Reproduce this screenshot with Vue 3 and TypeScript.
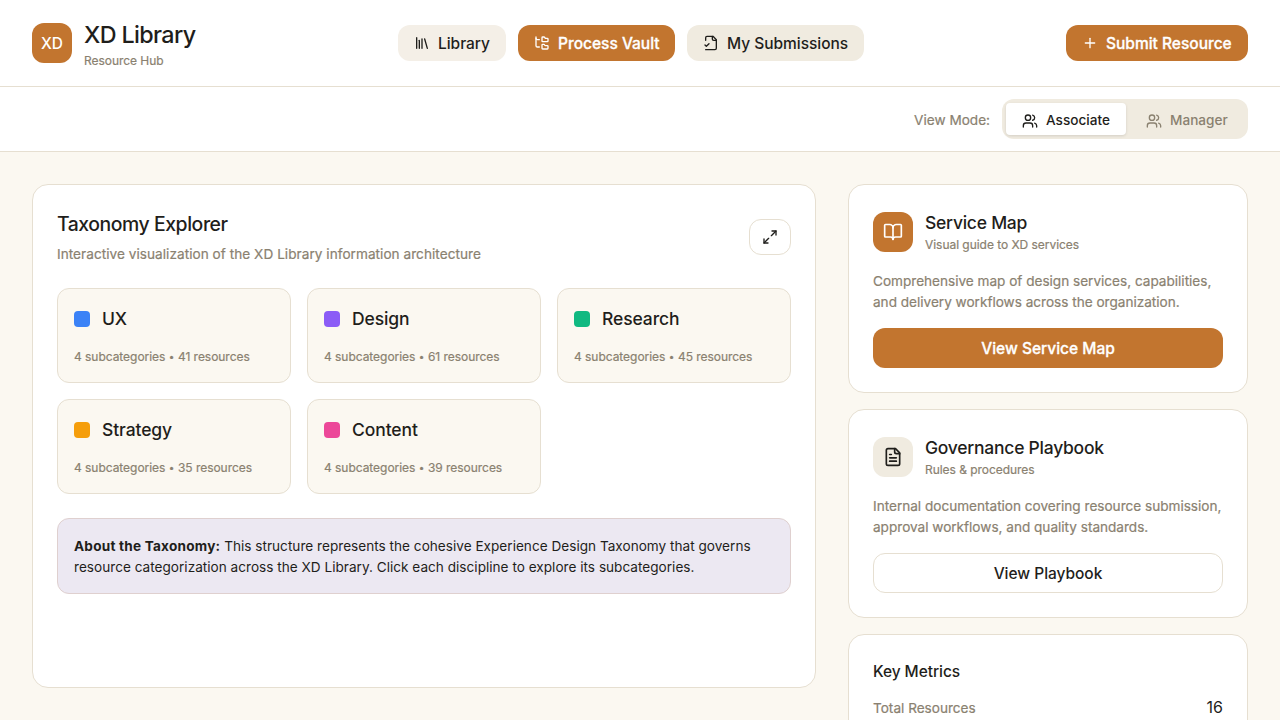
<script setup lang="ts">
import { ref } from 'vue'

interface Discipline {
  name: string
  swatch: string
  subcategories: number
  resources: number
}

const disciplines: Discipline[] = [
  { name: 'UX', swatch: 'blue', subcategories: 4, resources: 41 },
  { name: 'Design', swatch: 'violet', subcategories: 4, resources: 61 },
  { name: 'Research', swatch: 'green', subcategories: 4, resources: 45 },
  { name: 'Strategy', swatch: 'amber', subcategories: 4, resources: 35 },
  { name: 'Content', swatch: 'pink', subcategories: 4, resources: 39 },
]

const modes = ['Associate', 'Manager'] as const
const mode = ref<(typeof modes)[number]>('Associate')
</script>

<template>
  <div class="page">
    <header class="topbar">
      <div class="brand">
        <div class="logo">XD</div>
        <div>
          <h1 class="brand-name">XD Library</h1>
          <p class="brand-sub">Resource Hub</p>
        </div>
      </div>
      <nav class="nav">
        <button class="btn nav-library">
          <svg class="icon" viewBox="0 0 24 24"><path d="m16 6 4 14" /><path d="M12 6v14" /><path d="M8 8v12" /><path d="M4 4v16" /></svg>
          <span>Library</span>
        </button>
        <button class="btn nav-vault primary">
          <svg class="icon" viewBox="0 0 24 24"><path d="M20 10a1 1 0 0 0 1-1V6a1 1 0 0 0-1-1h-2.500a1 1 0 0 1-.8-.4l-.9-1.200A1 1 0 0 0 15 3h-2a1 1 0 0 0-1 1v5a1 1 0 0 0 1 1Z" /><path d="M20 21a1 1 0 0 0 1-1v-3a1 1 0 0 0-1-1h-2.900a1 1 0 0 1-.88-.55l-.42-.85a1 1 0 0 0-.92-.6H13a1 1 0 0 0-1 1v5a1 1 0 0 0 1 1Z" /><path d="M3 5a2 2 0 0 0 2 2h3" /><path d="M3 3v13a2 2 0 0 0 2 2h3" /></svg>
          <span>Process Vault</span>
        </button>
        <button class="btn nav-submissions">
          <svg class="icon" viewBox="0 0 24 24"><path d="M4 22h14a2 2 0 0 0 2-2V7l-5-5H6a2 2 0 0 0-2 2v4" /><path d="M14 2v4a2 2 0 0 0 2 2h4" /><path d="m3 15 2 2 4-4" /></svg>
          <span>My Submissions</span>
        </button>
      </nav>
      <button class="btn submit primary">
        <svg class="icon" viewBox="0 0 24 24"><path d="M5 12h14" /><path d="M12 5v14" /></svg>
        <span>Submit Resource</span>
      </button>
    </header>

    <div class="modebar">
      <span class="mode-label">View Mode:</span>
      <div class="toggle">
        <button
          v-for="m in modes"
          :key="m"
          class="toggle-item"
          :class="{ active: mode === m }"
          @click="mode = m"
        >
          <svg class="icon" viewBox="0 0 24 24"><path d="M16 21v-2a4 4 0 0 0-4-4H6a4 4 0 0 0-4 4v2" /><circle cx="9" cy="7" r="4" /><path d="M22 21v-2a4 4 0 0 0-3-3.870" /><path d="M16 3.130a4 4 0 0 1 0 7.750" /></svg>
          <span>{{ m }}</span>
        </button>
      </div>
    </div>

    <main class="content">
      <section class="card explorer">
        <div class="explorer-head">
          <div>
            <h2 class="explorer-title">Taxonomy Explorer</h2>
            <p class="explorer-sub">Interactive visualization of the XD Library information architecture</p>
          </div>
          <button class="expand" aria-label="Expand">
            <svg class="icon" viewBox="0 0 24 24"><path d="M15 3h6v6" /><path d="m21 3-7 7" /><path d="m3 21 7-7" /><path d="M9 21H3v-6" /></svg>
          </button>
        </div>
        <div class="disciplines">
          <article v-for="d in disciplines" :key="d.name" class="discipline">
            <div class="discipline-head">
              <span class="swatch" :class="d.swatch"></span>
              <h3 class="card-title">{{ d.name }}</h3>
            </div>
            <p class="small">{{ d.subcategories }} subcategories <span class="dot">•</span> {{ d.resources }} resources</p>
          </article>
        </div>
        <p class="about">
          <strong>About the Taxonomy:</strong> This structure represents the cohesive Experience Design Taxonomy that governs resource categorization across the XD Library. Click each discipline to explore its subcategories.
        </p>
      </section>

      <aside class="side">
        <section class="card">
          <div class="resource-head">
            <div class="tile primary">
              <svg class="icon large" viewBox="0 0 24 24"><path d="M12 7v14" /><path d="M3 18a1 1 0 0 1-1-1V4a1 1 0 0 1 1-1h5a4 4 0 0 1 4 4 4 4 0 0 1 4-4h5a1 1 0 0 1 1 1v13a1 1 0 0 1-1 1h-6a3 3 0 0 0-3 3 3 3 0 0 0-3-3z" /></svg>
            </div>
            <div>
              <h3 class="card-title">Service Map</h3>
              <p class="small">Visual guide to XD services</p>
            </div>
          </div>
          <p class="blurb">Comprehensive map of design services, capabilities, and delivery workflows across the organization.</p>
          <button class="wide primary">View Service Map</button>
        </section>

        <section class="card">
          <div class="resource-head">
            <div class="tile">
              <svg class="icon large" viewBox="0 0 24 24"><path d="M15 2H6a2 2 0 0 0-2 2v16a2 2 0 0 0 2 2h12a2 2 0 0 0 2-2V7Z" /><path d="M14 2v4a2 2 0 0 0 2 2h4" /><path d="M10 9H8" /><path d="M16 13H8" /><path d="M16 17H8" /></svg>
            </div>
            <div>
              <h3 class="card-title">Governance Playbook</h3>
              <p class="small">Rules &amp; procedures</p>
            </div>
          </div>
          <p class="blurb">Internal documentation covering resource submission, approval workflows, and quality standards.</p>
          <button class="wide outline">View Playbook</button>
        </section>

        <section class="card">
          <h3 class="metrics-title">Key Metrics</h3>
          <div class="metric">
            <span class="metric-label">Total Resources</span>
            <span class="metric-value">16</span>
          </div>
        </section>
      </aside>
    </main>
  </div>
</template>

<style>
html,
body {
  margin: 0;
  overflow: hidden;
  background: #fbf8f1;
}
</style>

<style scoped>
.page {
  height: 720px;
  overflow: hidden;
  background: #fbf8f1;
  color: #1f1e1b;
  font-family: Inter, 'Liberation Sans', sans-serif;
  font-size: 15.5px;
  line-height: 24px;
}
.page * {
  box-sizing: border-box;
}
h1,
h2,
h3,
p {
  margin: 0;
  font-weight: 500;
}
p {
  font-weight: 400;
}
button {
  margin: 0;
  padding: 0;
  border: 0;
  background: none;
  color: inherit;
  font: inherit;
  font-weight: 500;
  letter-spacing: -0.03px;
  white-space: nowrap;
}
.icon {
  display: block;
  flex: none;
  width: 16px;
  height: 16px;
  fill: none;
  stroke: currentColor;
  stroke-width: 2;
  stroke-linecap: round;
  stroke-linejoin: round;
}
.icon.large {
  width: 20px;
  height: 20px;
}
.topbar {
  display: flex;
  align-items: center;
  justify-content: space-between;
  height: 87px;
  padding: 0 32px;
  border-bottom: 1px solid #e6dfd1;
  background: #fff;
}
.brand {
  display: flex;
  align-items: center;
  gap: 12px;
  width: 163px;
  white-space: nowrap;
}
.logo {
  display: flex;
  flex: none;
  align-items: center;
  justify-content: center;
  width: 40px;
  height: 40px;
  padding-top: 2px;
  border-radius: 12px;
  background: #c2752f;
  color: #fff;
  font-weight: 500;
}
.brand-name {
  padding-top: 1px;
  font-size: 23.3px;
  line-height: 35px;
  letter-spacing: -0.63px;
}
.brand-sub,
.small {
  color: #8a8170;
  font-size: 12px;
  line-height: 18px;
  letter-spacing: -0.04px;
}
.brand-sub,
.small,
.explorer-sub,
.blurb,
.mode-label,
.metric-label {
  -webkit-text-stroke: 0.2px currentColor;
}
.dot {
  margin: 0 0.2px;
  font-size: 10px;
  line-height: 0;
  vertical-align: 1px;
}
.nav {
  display: flex;
  gap: 12px;
}
.btn {
  display: flex;
  align-items: center;
  gap: 8.5px;
  height: 36px;
  padding: 0 16px;
  border-radius: 12px;
  background: #f0ebe0;
}
.btn span {
  padding-top: 2px;
}
.nav-library {
  width: 108px;
  background: #f4efe7;
}
.nav-vault {
  width: 157px;
}
.nav-submissions {
  width: 177px;
}
.submit {
  gap: 8px;
  width: 182px;
}
.primary {
  background: #c2752f;
  color: #fff;
}
.btn.primary,
.wide.primary {
  letter-spacing: 0;
  -webkit-text-stroke: 0.3px currentColor;
}
.modebar {
  display: flex;
  align-items: center;
  justify-content: flex-end;
  gap: 12px;
  height: 65px;
  padding: 0 32px;
  border-bottom: 1px solid #e6dfd1;
  background: #fff;
}
.mode-label,
.metric-label {
  color: #8a8170;
  font-size: 13.6px;
  padding-top: 2px;
}
.toggle {
  display: flex;
  gap: 4px;
  width: 246px;
  height: 40px;
  padding: 4px;
  border-radius: 12px;
  background: #f0ebe0;
}
.toggle-item {
  display: flex;
  align-items: center;
  gap: 8px;
  width: 114px;
  height: 32px;
  padding: 3px 16px 0;
  border-radius: 4px;
  color: #8a8170;
  font-size: 13.6px;
  letter-spacing: 0;
}
.toggle-item span {
  padding-bottom: 2px;
}
.toggle-item.active {
  width: 120px;
  background: #fff;
  color: #1f1e1b;
  box-shadow: 0 1px 3px rgba(0, 0, 0, 0.12);
}
.content {
  display: grid;
  grid-template-columns: 784px 400px;
  gap: 32px;
  align-items: start;
  padding: 32px;
}
.card {
  padding: 24px;
  border: 1px solid #e6dfd1;
  border-radius: 16px;
  background: #fff;
}
.explorer {
  height: 504px;
}
.explorer-head {
  display: flex;
  align-items: center;
  justify-content: space-between;
  height: 55px;
}
.explorer-title {
  font-size: 19.4px;
  line-height: 30px;
  letter-spacing: -0.44px;
}
.explorer-sub {
  margin: 5px 0 -1px;
  color: #8a8170;
  font-size: 13.6px;
  line-height: 21px;
  letter-spacing: 0.04px;
}
.expand {
  display: flex;
  align-items: center;
  justify-content: center;
  width: 42px;
  height: 36px;
  border: 1px solid #e6dfd1;
  border-radius: 12px;
}
.disciplines {
  display: grid;
  grid-template-columns: repeat(3, 234px);
  gap: 16px;
  margin-top: 24px;
}
.discipline {
  height: 95px;
  padding: 16px;
  border: 1px solid #e6dfd1;
  border-radius: 12px;
  background: #fbf8f1;
}
.discipline-head {
  display: flex;
  align-items: center;
  gap: 12px;
  margin-bottom: 16px;
}
.discipline .card-title {
  letter-spacing: -0.1px;
}
.swatch {
  width: 16px;
  height: 16px;
  border-radius: 4px;
}
.blue { background: #3b82f6; }
.violet { background: #8b5cf6; }
.green { background: #10b981; }
.amber { background: #f59e0b; }
.pink { background: #ec4899; }
.card-title {
  font-size: 17.5px;
  line-height: 27px;
  letter-spacing: -0.25px;
}
.about {
  margin-top: 24px;
  padding: 17px 16px 15px;
  border: 1px solid #dfd0cf;
  border-radius: 12px;
  background: #ece8f2;
  font-size: 13.6px;
  line-height: 21px;
  letter-spacing: 0.01px;
}
.about strong {
  letter-spacing: 0.22px;
}
.side {
  display: flex;
  flex-direction: column;
  gap: 16px;
}
.resource-head {
  display: flex;
  align-items: center;
  gap: 12px;
}
.tile {
  display: flex;
  align-items: center;
  justify-content: center;
  width: 40px;
  height: 40px;
  border-radius: 12px;
}
.tile:not(.primary) {
  background: #f0ebe0;
}
.blurb {
  margin: 17px -8px 15px 0;
  color: #8a8170;
  font-size: 13.6px;
  line-height: 21px;
  letter-spacing: -0.01px;
}
.wide {
  display: block;
  width: 100%;
  height: 40px;
  padding-top: 2px;
  border-radius: 12px;
}
.outline {
  border: 1px solid #e6dfd1;
}
.metrics-title {
  padding-top: 1px;
  font-size: 15.5px;
  line-height: 24px;
  letter-spacing: -0.07px;
}
.metric {
  display: flex;
  align-items: center;
  justify-content: space-between;
  margin-top: 10px;
}
.metric-value {
  font-size: 16px;
}
</style>
